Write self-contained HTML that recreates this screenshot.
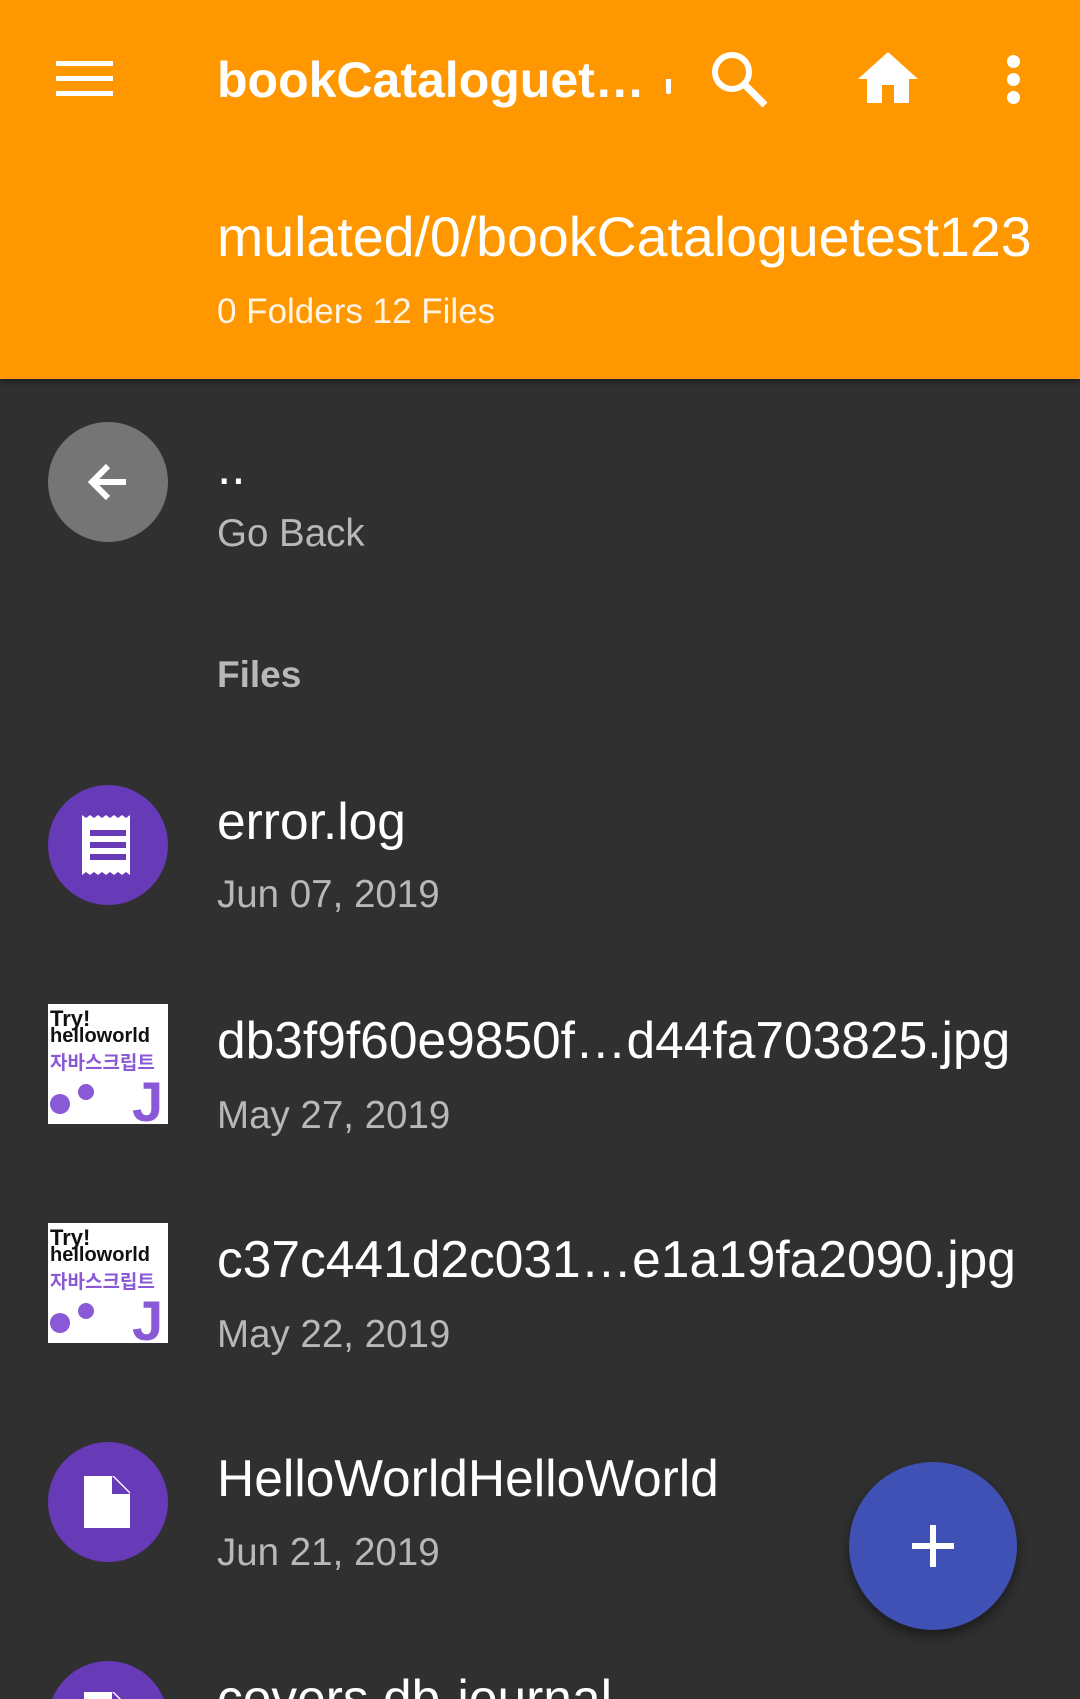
<!DOCTYPE html>
<html><head><meta charset="utf-8"><style>
*{margin:0;padding:0;box-sizing:border-box}
html,body{width:1080px;height:1699px;overflow:hidden;background:#303030}
#w{position:relative;width:1080px;height:1699px;overflow:hidden;background:#303030;font-family:"Liberation Sans","Noto Sans CJK KR",sans-serif}
.a{position:absolute;white-space:nowrap}
.bar{position:absolute;left:0;top:0;width:1080px;height:379px;background:#FF9800;box-shadow:0 3px 6px rgba(0,0,0,.4)}
.t{color:#fff;font-size:51.5px;line-height:52px;left:217px}
.d{color:#b8b8b8;font-size:38.5px;line-height:44px;left:217px}
.c{position:absolute;left:48px;width:120px;height:120px;border-radius:60px;background:#673AB7}
.thumb{position:absolute;left:48px;width:120px;height:120px;background:#fff;overflow:hidden}
</style></head><body><div id="w">
<div class="bar"></div>
<div class="a" style="left:56px;top:61px;width:57px;height:5px;background:#fff"></div>
<div class="a" style="left:56px;top:76px;width:57px;height:5px;background:#fff"></div>
<div class="a" style="left:56px;top:91px;width:57px;height:5px;background:#fff"></div>
<div class="a" style="left:217px;top:50px;color:#fff;font-weight:bold;font-size:50px;line-height:60px">bookCataloguet…</div>
<div class="a" style="left:666px;top:79px;width:5px;height:15px;background:#fff;border-radius:0 0 2px 2px"></div>
<svg class="a" style="left:710px;top:50px" width="62" height="60" viewBox="0 0 62 60"><circle cx="22" cy="22" r="17" fill="none" stroke="#fff" stroke-width="6"/><line x1="34" y1="34" x2="55" y2="55" stroke="#fff" stroke-width="7"/></svg>
<svg class="a" style="left:858px;top:52px" width="62" height="52" viewBox="0 0 62 52"><path d="M30 0L60 27H51V51H36V33H24V51H9V27H0Z" fill="#fff"/></svg>
<div class="a" style="left:1007px;top:55px;width:13px;height:13px;border-radius:7px;background:#fff"></div>
<div class="a" style="left:1007px;top:73px;width:13px;height:13px;border-radius:7px;background:#fff"></div>
<div class="a" style="left:1007px;top:91px;width:13px;height:13px;border-radius:7px;background:#fff"></div>
<div class="a" style="left:217px;top:208px;color:#fff;font-size:55.5px;line-height:58px">mulated/0/bookCataloguetest123</div>
<div class="a" style="left:217px;top:292px;color:#fff;font-size:35px;line-height:40px;opacity:.9">0 Folders 12 Files</div>

<div class="c" style="top:422px;background:#757575"></div>
<svg class="a" style="left:80px;top:454px" width="56" height="56" viewBox="0 0 56 56"><path d="M46 28H12M28 12L12 28L28 44" fill="none" stroke="#fff" stroke-width="6"/></svg>
<div class="a t" style="top:440px">..</div>
<div class="a d" style="top:512px">Go Back</div>
<div class="a" style="left:217px;top:653px;color:#b8b8b8;font-weight:bold;font-size:37px;line-height:44px">Files</div>

<div class="c" style="top:785px"></div>
<svg class="a" style="left:80px;top:813px" width="56" height="64" viewBox="0 0 56 64"><path d="M2 2l4 3 4-3 4 3 4-3 4 3 4-3 4 3 4-3 4 3 4-3 4 3 4-3V62l-4-3-4 3-4-3-4 3-4-3-4 3-4-3-4 3-4-3-4 3-4-3-4 3Z" fill="#fff"/><rect x="10" y="17" width="36" height="6" fill="#673AB7"/><rect x="10" y="29" width="36" height="6" fill="#673AB7"/><rect x="10" y="41" width="36" height="6" fill="#673AB7"/></svg>
<div class="a t" style="top:795px">error.log</div>
<div class="a d" style="top:873px">Jun 07, 2019</div>

<div class="thumb" style="top:1004px">
<div class="a" style="left:2px;top:2px;font:bold 22px 'Liberation Sans';color:#111">Try!</div>
<div class="a" style="left:2px;top:21px;font:bold 20px 'Liberation Sans';color:#111">helloworld</div>
<div class="a" style="left:2px;top:44px;font:bold 19px 'Noto Sans CJK KR',sans-serif;color:#8a5ad6">자바스크립트</div>
<div class="a" style="left:84px;top:70px;font:bold 56px 'Liberation Sans';color:#8a5ad6;line-height:56px">J</div>
<div class="a" style="left:2px;top:90px;width:20px;height:20px;border-radius:10px;background:#8a5ad6"></div>
<div class="a" style="left:30px;top:80px;width:16px;height:16px;border-radius:8px;background:#8a5ad6"></div>
</div>
<div class="a t" style="top:1014px">db3f9f60e9850f…d44fa703825.jpg</div>
<div class="a d" style="top:1094px">May 27, 2019</div>

<div class="thumb" style="top:1223px">
<div class="a" style="left:2px;top:2px;font:bold 22px 'Liberation Sans';color:#111">Try!</div>
<div class="a" style="left:2px;top:21px;font:bold 20px 'Liberation Sans';color:#111">helloworld</div>
<div class="a" style="left:2px;top:44px;font:bold 19px 'Noto Sans CJK KR',sans-serif;color:#8a5ad6">자바스크립트</div>
<div class="a" style="left:84px;top:70px;font:bold 56px 'Liberation Sans';color:#8a5ad6;line-height:56px">J</div>
<div class="a" style="left:2px;top:90px;width:20px;height:20px;border-radius:10px;background:#8a5ad6"></div>
<div class="a" style="left:30px;top:80px;width:16px;height:16px;border-radius:8px;background:#8a5ad6"></div>
</div>
<div class="a t" style="top:1233px">c37c441d2c031…e1a19fa2090.jpg</div>
<div class="a d" style="top:1313px">May 22, 2019</div>

<div class="c" style="top:1442px"></div>
<svg class="a" style="left:84px;top:1476px" width="50" height="52" viewBox="0 0 50 52"><path d="M0 0H30L46 16V52H0Z" fill="#fff"/><path d="M28 0V18H46" fill="#673AB7"/></svg>
<div class="a t" style="top:1452px">HelloWorldHelloWorld</div>
<div class="a d" style="top:1531px">Jun 21, 2019</div>

<div class="c" style="top:1661px"></div>
<svg class="a" style="left:84px;top:1692px" width="50" height="52" viewBox="0 0 50 52"><path d="M0 0H30L46 16V52H0Z" fill="#fff"/><path d="M28 0V18H46" fill="#673AB7"/></svg>
<div class="a t" style="top:1672px">covers.db-journal</div>

<div class="a" style="left:849px;top:1462px;width:168px;height:168px;border-radius:84px;background:#3F51B5;box-shadow:0 6px 12px rgba(0,0,0,.45)"></div>
<div class="a" style="left:912px;top:1543px;width:42px;height:6px;background:#fff"></div>
<div class="a" style="left:930px;top:1525px;width:6px;height:42px;background:#fff"></div>
</div></body></html>
